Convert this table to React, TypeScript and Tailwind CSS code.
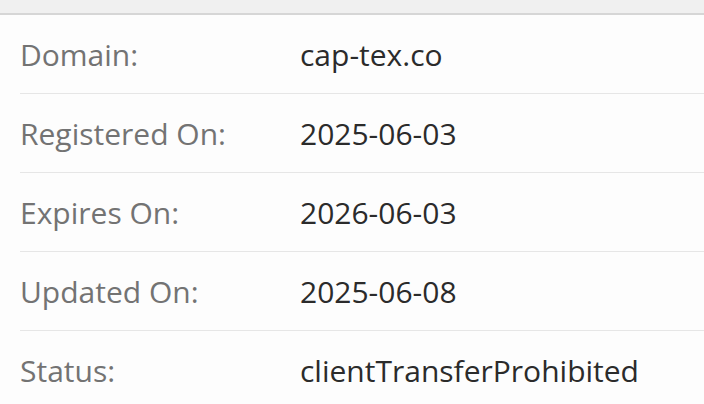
const rows = [
  { label: "Domain:", value: "cap-tex.co" },
  { label: "Registered On:", value: "2025-06-03" },
  { label: "Expires On:", value: "2026-06-03" },
  { label: "Updated On:", value: "2025-06-08" },
  { label: "Status:", value: "clientTransferProhibited" },
];

export default function App() {
  return (
    <div
      className="w-[704px] h-[404px] overflow-hidden bg-[#fdfdfd]"
      style={{ fontFamily: '"Open Sans", "Noto Sans", sans-serif' }}
    >
      <div className="h-[15px] bg-[#f0f0f0] border-b-2 border-[#d6d6d6]" />
      <div className="pl-5">
        {rows.map((row, i) => (
          <div
            key={row.label}
            className={`flex items-center h-[79px] ${
              i < rows.length - 1 ? "border-b border-[#e6e6e6]" : ""
            }`}
          >
            <div className="w-[280px] text-[30px] text-[#737373]">{row.label}</div>
            <div className="text-[30px] text-[#2b2b2b]">{row.value}</div>
          </div>
        ))}
      </div>
    </div>
  );
}
